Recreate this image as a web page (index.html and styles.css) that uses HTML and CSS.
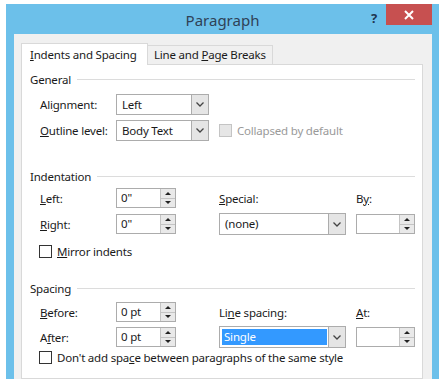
FILE: index.html
```html
<!DOCTYPE html>
<html lang="en">
<head>
  <meta charset="UTF-8" />
  <title>Paragraph</title>
  <link rel="stylesheet" href="styles.css">
</head>
<body>

  <div class="window">
    <div class="titlebar">
      <span></span>
      <span class="title">Paragraph</span>
      <div class="controls">
        <span class="help">?</span>
        <span class="close">
          <svg width="10" height="10" viewBox="0 0 10 10"><path d="M1 1 L9 9 M9 1 L1 9" stroke="#fff" stroke-width="2"/></svg>
        </span>
      </div>
    </div>

    <div class="client">
      <div class="tabs">
        <div class="tab active"><u>I</u>ndents and Spacing</div>
        <div class="tab">Line and <u>P</u>age Breaks</div>
      </div>

      <div class="panel">
        <!-- General -->
        <div class="group-title"><span>General</span><i class="rule"></i></div>
        <div class="row tall gap-7">
          <span>Ali<u>g</u>nment:</span>
          <div class="select short"><span class="value">Left</span><span class="arrow"><svg width="8" height="5" viewBox="0 0 8 5"><path d="M0.5 0.5 L4 4 L7.5 0.5" fill="none" stroke="#444" stroke-width="1.3"/></svg></span></div>
        </div>
        <div class="row tall gap-5">
          <span><u>O</u>utline level:</span>
          <div class="select short"><span class="value">Body Text</span><span class="arrow"><svg width="8" height="5" viewBox="0 0 8 5"><path d="M0.5 0.5 L4 4 L7.5 0.5" fill="none" stroke="#444" stroke-width="1.3"/></svg></span></div>
          <div class="check disabled"><span class="box"></span>Collapsed by default</div>
        </div>

        <!-- Indentation -->
        <div class="group-title gap-27"><span>Indentation</span><i class="rule"></i></div>
        <div class="row gap-4">
          <span><u>L</u>eft:</span>
          <div class="spin"><span class="value">0"</span><span class="btns"><i class="up"></i><i class="down"></i></span></div>
          <span><u>S</u>pecial:</span>
          <span>B<u>y</u>:</span>
        </div>
        <div class="row gap-5">
          <span><u>R</u>ight:</span>
          <div class="spin"><span class="value">0"</span><span class="btns"><i class="up"></i><i class="down"></i></span></div>
          <div class="select wide"><span class="value">(none)</span><span class="arrow"><svg width="8" height="5" viewBox="0 0 8 5"><path d="M0.5 0.5 L4 4 L7.5 0.5" fill="none" stroke="#444" stroke-width="1.3"/></svg></span></div>
          <div class="spin small"><span class="value"></span><span class="btns"><i class="up"></i><i class="down"></i></span></div>
        </div>
        <div class="check-row gap-10">
          <div class="check"><span class="box"></span><span><u>M</u>irror indents</span></div>
        </div>

        <!-- Spacing -->
        <div class="group-title gap-21"><span>Spacing</span><i class="rule"></i></div>
        <div class="row gap-6">
          <span><u>B</u>efore:</span>
          <div class="spin"><span class="value">0 pt</span><span class="btns"><i class="up"></i><i class="down"></i></span></div>
          <span>Li<u>n</u>e spacing:</span>
          <span><u>A</u>t:</span>
        </div>
        <div class="row gap-4">
          <span>A<u>f</u>ter:</span>
          <div class="spin"><span class="value">0 pt</span><span class="btns"><i class="up"></i><i class="down"></i></span></div>
          <div class="select wide"><span class="value selected">Single</span><span class="arrow"><svg width="8" height="5" viewBox="0 0 8 5"><path d="M0.5 0.5 L4 4 L7.5 0.5" fill="none" stroke="#444" stroke-width="1.3"/></svg></span></div>
          <div class="spin small"><span class="value"></span><span class="btns"><i class="up"></i><i class="down"></i></span></div>
        </div>
        <div class="check-row gap-3">
          <div class="check"><span class="box"></span><span>Don't add spa<u>c</u>e between paragraphs of the same style</span></div>
        </div>
      </div>
    </div>
  </div>

</body>
</html>
```

FILE: styles.css
```css
body {
  margin: 0;
  background: #ffffff;
  font-family: "Noto Sans", "Open Sans", sans-serif;
  font-size: 11.5px;
  letter-spacing: -0.2px;
  color: #1a1a1a;
}

u {
  text-decoration: underline;
  text-underline-offset: 1px;
}

.window {
  margin: 4px 0 0 6px;
  width: 433px;
  height: 375px;
  background: #6cc0ea;
  display: flex;
  flex-direction: column;
  overflow: hidden;
}

/* title bar */
.titlebar {
  height: 30px;
  display: grid;
  grid-template-columns: 1fr auto 1fr;
}

.title {
  font-size: 15px;
  letter-spacing: 0;
  color: #2f4257;
  line-height: 32px;
}

.controls {
  justify-self: end;
  display: flex;
  align-items: flex-start;
  margin-right: 7px;
}

.help {
  font-weight: bold;
  font-size: 13px;
  color: #1f3550;
  margin: 5px 9px 0 0;
}

.close {
  width: 46px;
  height: 21px;
  background: #c75050;
  display: flex;
  align-items: center;
  justify-content: center;
}

/* client area */
.client {
  flex: 1;
  background: #f0f0f0;
  margin: 0 7px 0 8px;
  padding: 9px 9px 0 7px;
  display: flex;
  flex-direction: column;
}

.tabs {
  display: flex;
  align-items: flex-end;
  height: 22px;
  margin-bottom: -1px;
}

.tab {
  height: 18px;
  width: 118px;
  padding-left: 6px;
  line-height: 18px;
  white-space: nowrap;
  background: #f0f0f0;
  border: 1px solid #d9d9d9;
  border-bottom: none;
  margin-bottom: 1px;
  margin-left: -1px;
}

.tab.active {
  position: relative;
  z-index: 1;
  height: 21px;
  width: 117px;
  padding-left: 8px;
  line-height: 22px;
  background: #ffffff;
  margin: 0;
}

.panel {
  flex: 1;
  background: #ffffff;
  border: 1px solid #d9d9d9;
  padding: 6px 7px 0 8px;
}

/* group headers */
.group-title {
  display: flex;
  align-items: center;
  height: 16px;
  gap: 6px;
}

.rule {
  flex: 1;
  height: 1px;
  background: #dcdcdc;
}

/* rows */
.row {
  display: grid;
  grid-template-columns: 76px 103px 137px 59px;
  align-items: center;
  height: 20px;
  margin-left: 10px;
  white-space: nowrap;
}

.row.tall {
  height: 21px;
}

.check-row {
  height: 16px;
  margin-left: 9px;
  display: flex;
  align-items: center;
  white-space: nowrap;
}

.gap-3 { margin-top: 3px; }
.gap-4 { margin-top: 4px; }
.gap-5 { margin-top: 5px; }
.gap-6 { margin-top: 6px; }
.gap-7 { margin-top: 7px; }
.gap-10 { margin-top: 10px; }
.gap-21 { margin-top: 21px; }
.gap-27 { margin-top: 27px; }

/* dropdowns */
.select {
  height: 19px;
  border: 1px solid #acacac;
  background: #ffffff;
  display: flex;
  align-items: stretch;
}

.select.short { width: 91px; }
.select.wide { width: 125px; height: 20px; }

.select .value {
  flex: 1;
  padding-left: 5px;
  line-height: 19px;
}

.select .value.selected {
  margin: 2px 1px 2px 2px;
  padding-left: 2px;
  background: #3399ff;
  color: #ffffff;
  line-height: 15px;
}

.select .arrow {
  width: 16px;
  background: #e5e5e5;
  border-left: 1px solid #acacac;
  display: flex;
  align-items: center;
  justify-content: center;
}

/* spinners */
.spin {
  width: 58px;
  height: 18px;
  border: 1px solid #acacac;
  background: #ffffff;
  display: flex;
}

.spin.small { width: 57px; }

.spin .value {
  flex: 1;
  padding-left: 4px;
  line-height: 18px;
}

.spin .btns {
  width: 14px;
  border-left: 1px solid #c4c4c4;
  background: #e9e9e9;
  display: flex;
  flex-direction: column;
}

.btns i {
  flex: 1;
  display: flex;
  align-items: center;
  justify-content: center;
}

.btns i.up {
  border-bottom: 1px solid #c4c4c4;
}

.btns i::before {
  content: "";
  border-left: 3px solid transparent;
  border-right: 3px solid transparent;
}

.btns i.up::before { border-bottom: 3px solid #222; }
.btns i.down::before { border-top: 3px solid #222; }

/* checkboxes */
.check {
  display: flex;
  align-items: center;
  gap: 5px;
}

.check .box {
  width: 11px;
  height: 11px;
  border: 1px solid #333333;
  background: #ffffff;
}

.check.disabled {
  color: #9a9a9a;
}

.check.disabled .box {
  border-color: #c4c4c4;
  background: #e6e6e6;
}
```
